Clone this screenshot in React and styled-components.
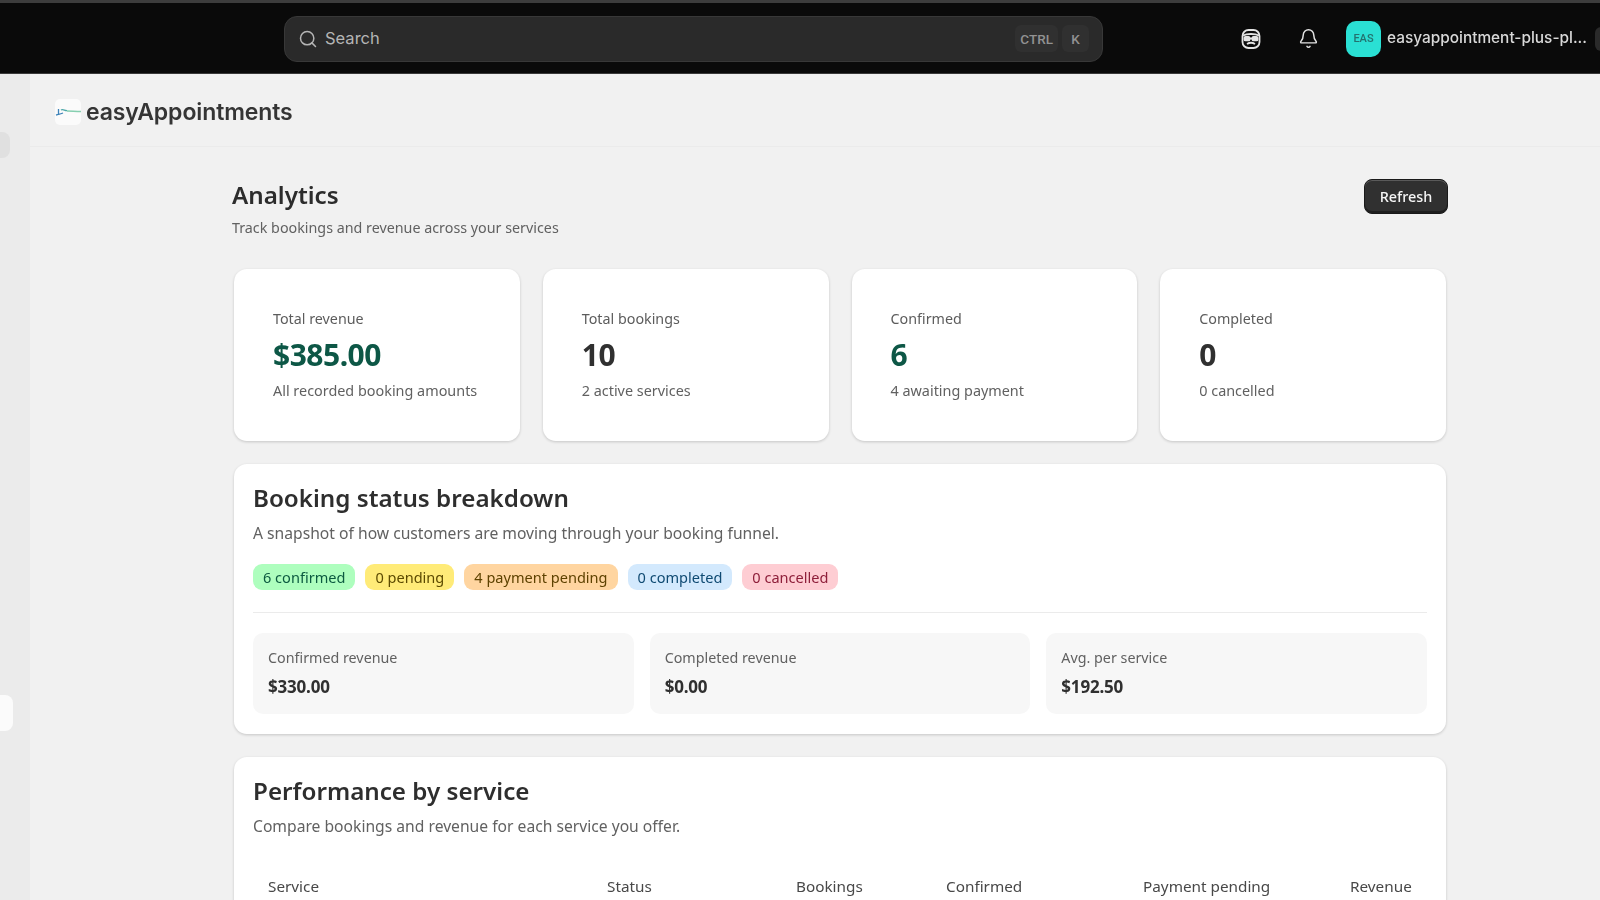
import React from 'react';
import styled, { createGlobalStyle } from 'styled-components';
import { Search, Bell } from 'lucide-react';

const Global = createGlobalStyle`
  html, body {
    margin: 0;
    padding: 0;
    height: 900px;
    overflow: hidden;
    background: #f1f1f1;
  }
  * {
    box-sizing: border-box;
  }
`;

const Page = styled.div`
  width: 1600px;
  height: 900px;
  overflow: hidden;
  display: flex;
  flex-direction: column;
  font-family: 'Noto Sans', sans-serif;
  color: #303030;
  border-top: 3px solid #3d3d3d;
  filter: blur(0.35px);
`;

const TopBar = styled.header`
  flex: 0 0 71px;
  background: #0a0a0a;
  border-bottom: 1px solid #3a3a3a;
  display: flex;
  align-items: center;
  padding: 1px 0 0 284px;
  font-family: Inter, sans-serif;
  > * {
    flex: none;
  }
`;

const SearchBox = styled.div`
  width: 819px;
  height: 46px;
  background: #2a2a2a;
  border: 1px solid #383838;
  border-radius: 13px;
  display: flex;
  align-items: center;
  padding: 0 13px;
  color: #b5b5b5;
  font-size: 16.5px;
  gap: 7px;
`;

const SearchText = styled.span`
  flex: 1;
  margin-bottom: 1px;
`;

const Key = styled.kbd`
  height: 27px;
  min-width: 27px;
  padding: 0 5px;
  background: #303030;
  border-radius: 6px;
  display: flex;
  align-items: center;
  justify-content: center;
  font-family: Roboto, sans-serif;
  font-size: 13.5px;
  font-weight: 500;
  color: #929292;
`;

const KeyGroup = styled.div`
  display: flex;
  gap: 4px;
`;

const IconSlot = styled.div`
  color: #e3e3e3;
  display: flex;
  margin-left: ${p => p.$left}px;
`;

const Avatar = styled.div`
  width: 35px;
  height: 36px;
  margin-left: 27px;
  background: #2ae0d4;
  border-radius: 10px;
  display: flex;
  align-items: center;
  justify-content: center;
  font-family: Roboto, sans-serif;
  font-size: 11px;
  font-weight: 500;
  color: #24716f;
`;

const UserName = styled.span`
  margin: 0 0 2px 6px;
  font-size: 15.4px;
  font-weight: 500;
  color: #d9d9d9;
  white-space: nowrap;
  font-family: Inter, sans-serif;
`;

const EdgeChip = styled.div`
  width: 12px;
  height: 24px;
  margin-left: 8px;
  background: #2a2a2a;
  border-radius: 6px;
`;

const Body = styled.div`
  flex: 1;
  display: flex;
  min-height: 0;
`;

const Sidebar = styled.aside`
  flex: 0 0 30px;
  background: #ebebeb;
  padding-top: 58px;
`;

const Pill = styled.div`
  width: ${p => p.$w}px;
  height: ${p => p.$h}px;
  margin-top: ${p => p.$top}px;
  background: ${p => p.$bg};
  border-radius: 0 8px 8px 0;
`;

const Main = styled.main`
  flex: 1;
  min-width: 0;
`;

const AppHeader = styled.div`
  height: 73px;
  border-bottom: 1px solid #ebebeb;
  padding: 4px 0 0 25px;
  display: flex;
  align-items: center;
  gap: 5px;
`;

const LogoTile = styled.div`
  width: 26px;
  height: 26px;
  background: #fbfbfb;
  border-radius: 5px;
  display: flex;
  align-items: center;
  margin-bottom: 1px;
`;

const AppName = styled.h1`
  margin: 0;
  font-family: Inter, sans-serif;
  font-size: 23px;
  font-weight: 560;
  letter-spacing: -0.1px;
  color: #353535;
`;

const Content = styled.div`
  width: 1216px;
  margin-left: 202px;
  padding-top: 32px;
`;

const TitleRow = styled.div`
  display: flex;
  justify-content: space-between;
  align-items: flex-start;
  margin-bottom: 31px;
`;

const PageTitle = styled.h2`
  margin: 1px 0 0;
  font-size: 24.2px;
  line-height: 30px;
  font-weight: 600;
  color: #2c2c2c;
`;

const PageSub = styled.p`
  margin: 8px 0 0;
  font-size: 14.3px;
  line-height: 20px;
  color: #616161;
`;

const RefreshButton = styled.button`
  width: 84px;
  height: 35px;
  background: #303030;
  border: 1px solid #1a1a1a;
  border-radius: 8px;
  box-shadow: inset 0 1px 0 #5a5a5a, inset 0 -2px 0 #1f1f1f;
  color: #f5f5f5;
  font-family: inherit;
  font-size: 14.4px;
  font-weight: 500;
`;

const Inner = styled.div`
  margin-left: 2px;
  width: 1212px;
  display: flex;
  flex-direction: column;
  gap: 23px;
`;

const CardRow = styled.div`
  display: grid;
  grid-template-columns: repeat(4, 1fr);
  gap: 23px;
`;

const Card = styled.section`
  background: #fff;
  border-radius: 13px;
  box-shadow: 0 1px 3px rgba(0, 0, 0, 0.18);
`;

const MetricCard = styled(Card)`
  height: 172px;
  padding: 40px 39px;
`;

const MetricLabel = styled.div`
  font-size: 14.3px;
  line-height: 20px;
  color: #5c5c5c;
`;

const MetricValue = styled.div`
  margin-top: 7px;
  font-size: 30px;
  line-height: 38px;
  font-weight: 700;
  letter-spacing: -0.5px;
  color: ${p => p.$color || '#303030'};
`;

const MetricNote = styled.div`
  margin-top: 7px;
  font-size: 14.4px;
  line-height: 20px;
  color: #616161;
`;

const Panel = styled(Card)`
  padding: 17px 19px 20px;
`;

const PanelTitle = styled.h3`
  margin: 0;
  font-size: 24.2px;
  line-height: 34px;
  font-weight: 600;
  color: #2e2e2e;
`;

const PanelSub = styled.p`
  margin: 7px 0 0;
  font-size: 15.66px;
  line-height: 22px;
  color: #616161;
`;

const ChipRow = styled.div`
  display: flex;
  gap: 10px;
  margin-top: 20px;
`;

const Chip = styled.span`
  height: 26px;
  padding: 0 10px;
  border-radius: 9px;
  background: ${p => p.$bg};
  color: ${p => p.$fg};
  font-size: 14.55px;
  line-height: 26px;
`;

const Divider = styled.hr`
  margin: 22px 0 20px;
  border: 0;
  border-top: 1px solid #ebebeb;
`;

const StatGrid = styled.div`
  display: grid;
  grid-template-columns: repeat(3, 1fr);
  gap: 16px;
`;

const StatBox = styled.div`
  height: 81px;
  padding: 15px 15px;
  background: #f7f7f7;
  border-radius: 10px;
`;

const StatLabel = styled.div`
  font-size: 14.3px;
  line-height: 20px;
  color: #616161;
`;

const StatValue = styled.div`
  margin-top: 7px;
  font-size: 17px;
  line-height: 24px;
  font-weight: 700;
  letter-spacing: -0.2px;
  color: #303030;
`;

const TableHead = styled.div`
  display: grid;
  grid-template-columns: 339px 189px 150px 197px 207px auto;
  margin-top: 38px;
  padding-left: 15px;
  font-size: 15.3px;
  line-height: 22px;
  color: #484848;
`;

const FaceIcon = () => (
  <svg width="22" height="22" viewBox="0 0 22 22" fill="none" stroke="currentColor" strokeWidth="1.8">
    <rect x="2.5" y="2" width="17" height="18" rx="6" />
    <path d="M3 7.5c4-2 12-2 16 0" />
    <rect x="4.5" y="9" width="5" height="3.4" rx="1" fill="currentColor" />
    <rect x="12.5" y="9" width="5" height="3.4" rx="1" fill="currentColor" />
    <path d="M10 10.5h2" />
    <path d="M7 16c2.6-1.6 5.4-1.6 8 0" />
  </svg>
);

const LogoMark = () => (
  <svg width="26" height="12" viewBox="0 0 26 12" fill="none">
    <path d="M1 9c2-.5 5-1 7-2" stroke="#3d83b8" strokeWidth="1.3" />
    <path d="M3.5 3v6" stroke="#3d83b8" strokeWidth="1.3" />
    <path d="M6 4c2-1.5 4 1 6 .5" stroke="#4ba7a8" strokeWidth="1.3" />
    <path d="M12 5c4 0 9 .5 14 .5" stroke="#86cfb0" strokeWidth="1.5" />
  </svg>
);

const metrics = [
  { label: 'Total revenue', value: '$385.00', note: 'All recorded booking amounts', color: '#0d5746' },
  { label: 'Total bookings', value: '10', note: '2 active services' },
  { label: 'Confirmed', value: '6', note: '4 awaiting payment', color: '#0d5746' },
  { label: 'Completed', value: '0', note: '0 cancelled' },
];

const chips = [
  { text: '6 confirmed', bg: '#aefebe', fg: '#0c5a40' },
  { text: '0 pending', bg: '#ffeb78', fg: '#5c4a00' },
  { text: '4 payment pending', bg: '#ffd5a0', fg: '#5e4200' },
  { text: '0 completed', bg: '#d3e9fd', fg: '#0f4a72' },
  { text: '0 cancelled', bg: '#fecdd3', fg: '#8e1f3a' },
];

const stats = [
  { label: 'Confirmed revenue', value: '$330.00' },
  { label: 'Completed revenue', value: '$0.00' },
  { label: 'Avg. per service', value: '$192.50' },
];

const columns = ['Service', 'Status', 'Bookings', 'Confirmed', 'Payment pending', 'Revenue'];

export default function App() {
  return (
    <Page>
      <Global />
      <TopBar>
        <SearchBox>
          <Search size={20} strokeWidth={1.8} />
          <SearchText>Search</SearchText>
          <KeyGroup>
            <Key>CTRL</Key>
            <Key>K</Key>
          </KeyGroup>
        </SearchBox>
        <IconSlot $left={137}>
          <FaceIcon />
        </IconSlot>
        <IconSlot $left={36}>
          <Bell size={21} strokeWidth={1.7} />
        </IconSlot>
        <Avatar>EAS</Avatar>
        <UserName>easyappointment-plus-pl...</UserName>
        <EdgeChip />
      </TopBar>
      <Body>
        <Sidebar>
          <Pill $w={10} $h={26} $top={0} $bg="#e0e0e0" />
          <Pill $w={13} $h={36} $top={537} $bg="#fbfbfb" />
        </Sidebar>
        <Main>
          <AppHeader>
            <LogoTile>
              <LogoMark />
            </LogoTile>
            <AppName>easyAppointments</AppName>
          </AppHeader>
          <Content>
            <TitleRow>
              <div>
                <PageTitle>Analytics</PageTitle>
                <PageSub>Track bookings and revenue across your services</PageSub>
              </div>
              <RefreshButton>Refresh</RefreshButton>
            </TitleRow>
            <Inner>
              <CardRow>
                {metrics.map(m => (
                  <MetricCard key={m.label}>
                    <MetricLabel>{m.label}</MetricLabel>
                    <MetricValue $color={m.color}>{m.value}</MetricValue>
                    <MetricNote>{m.note}</MetricNote>
                  </MetricCard>
                ))}
              </CardRow>
              <Panel>
                <PanelTitle>Booking status breakdown</PanelTitle>
                <PanelSub>A snapshot of how customers are moving through your booking funnel.</PanelSub>
                <ChipRow>
                  {chips.map(c => (
                    <Chip key={c.text} $bg={c.bg} $fg={c.fg}>{c.text}</Chip>
                  ))}
                </ChipRow>
                <Divider />
                <StatGrid>
                  {stats.map(s => (
                    <StatBox key={s.label}>
                      <StatLabel>{s.label}</StatLabel>
                      <StatValue>{s.value}</StatValue>
                    </StatBox>
                  ))}
                </StatGrid>
              </Panel>
              <Panel>
                <PanelTitle>Performance by service</PanelTitle>
                <PanelSub>Compare bookings and revenue for each service you offer.</PanelSub>
                <TableHead>
                  {columns.map(c => (
                    <span key={c}>{c}</span>
                  ))}
                </TableHead>
              </Panel>
            </Inner>
          </Content>
        </Main>
      </Body>
    </Page>
  );
}
